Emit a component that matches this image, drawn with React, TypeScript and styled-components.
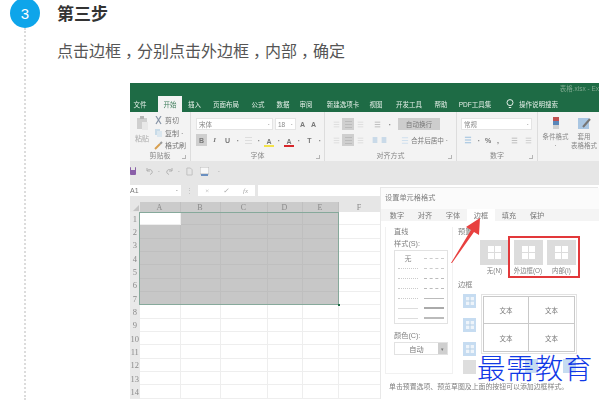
import React from "react";
import styled, { createGlobalStyle } from "styled-components";

const Global = createGlobalStyle`
  html, body { margin: 0; padding: 0; background: #fff; overflow: hidden; }
  body { font-family: "Liberation Sans", "Noto Sans CJK SC", sans-serif; }
`;
const CJK = `"Liberation Sans", "Noto Sans CJK SC", sans-serif`;

const Page = styled.div`
  width: 599px; height: 400px; display: flex; overflow: hidden; background: #fff;
`;
const Rail = styled.div`
  width: 57px; flex: none; position: relative;
  &::after {
    content: ""; position: absolute; left: 24px; top: 28px; bottom: 0;
    border-left: 2px dotted #dcdcdc;
  }
`;
const StepDot = styled.div`
  width: 30px; height: 30px; margin: -2px 0 0 10px; border-radius: 50%;
  background: #0ea5ea; color: #fff; display: flex; align-items: center; justify-content: center;
  font-size: 15px;
`;
const Main = styled.div`flex: 1; min-width: 0; display: flex; flex-direction: column;`;
const StepTitle = styled.h2`
  margin: 4px 0 0; font-size: 17px; line-height: 22px; font-weight: 700; color: #333;
`;
const StepText = styled.p`
  margin: 15px 0 0; font-size: 16px; line-height: 22px; color: #555;
`;
const Comma = styled.span`padding-left: 4px; letter-spacing: -4px;`;
const Shot = styled.div`
  margin: 20px 0 0 73px; width: 469px; height: 317px; flex: none; position: relative;
  overflow: hidden; background: #fff; font-family: ${CJK}; filter: blur(0.45px);
`;

/* title & tabs */
const GreenBar = styled.div`height: 29px; background: #1e6b45; display: flex; flex-direction: column;`;
const DocName = styled.div`
  height: 13px; font-size: 6.5px; line-height: 11px; color: #7fa98f; text-align: right; white-space: nowrap;
`;
const TabRow = styled.div`height: 16px; display: flex; align-items: stretch; font-size: 6.5px;`;
const RibbonTab = styled.div<{ $w: number; $active?: boolean; $start?: boolean }>`
  width: ${p => p.$w}px; flex: none; display: flex; align-items: center; gap: 5px;
  justify-content: ${p => (p.$start ? "flex-start" : "center")};
  padding-left: ${p => (p.$start ? 3 : 0)}px; box-sizing: border-box;
  white-space: nowrap;
  color: ${p => (p.$active ? "#3f7d5c" : "#e4efe8")};
  background: ${p => (p.$active ? "#f3f3f3" : "transparent")};
`;

/* ribbon */
const Ribbon = styled.div`height: 49px; background: #f3f3f3; display: flex; color: #777; font-size: 7px;`;
const Group = styled.div<{ $w: number; $last?: boolean }>`
  width: ${p => p.$w}px; flex: none; display: flex; flex-direction: column; box-sizing: border-box;
  border-right: ${p => (p.$last ? "none" : "1px solid #dddddd")};
`;
const GroupBody = styled.div`flex: 1; display: flex; min-height: 0;`;
const GroupLabel = styled.div`
  height: 10px; margin-bottom: 0; line-height: 10px; text-align: center; color: #888; font-size: 7px; white-space: nowrap; position: relative;
  &::after {
    content: ""; position: absolute; right: 4px; top: 4px; width: 3px; height: 3px;
    border-right: 1px solid #b5b5b5; border-bottom: 1px solid #b5b5b5;
  }
`;
const Paste = styled.div`
  width: 24px; flex: none; display: flex; flex-direction: column; align-items: center; padding-top: 4px; gap: 3px; color: #aaa;
`;
const ClipCol = styled.div`
  display: flex; flex-direction: column; gap: 2.5px; padding-top: 3px;
`;
const ClipItem = styled.div`display: flex; align-items: center; gap: 2px; height: 10px; white-space: nowrap; color: #777;`;
const Rows = styled.div<{ $pl?: number }>`
  flex: 1; display: flex; flex-direction: column; gap: 2px; padding: 5px 0 0 ${p => p.$pl ?? 5}px;
`;
const ToolRow = styled.div`display: flex; align-items: center; gap: 2px; height: 14px; white-space: nowrap;`;
const Field = styled.div<{ $w: number }>`
  width: ${p => p.$w}px; height: 12px; flex: none; box-sizing: border-box; background: #fff; border: 1px solid #e4e4e4;
  display: flex; align-items: center; justify-content: space-between; padding: 0 2px; font-size: 6.5px; color: #888;
`;
const Glyph = styled.span<{ $on?: boolean; $w?: number }>`
  width: ${p => p.$w ?? 11}px; height: 12px; flex: none; display: flex; align-items: center; justify-content: center;
  background: ${p => (p.$on ? "#cfcfcf" : "transparent")}; color: #777; font-size: 7px; font-weight: 700;
`;
const ItalicGlyph = styled(Glyph)`font-style: italic; font-family: "Liberation Serif", serif;`;
const Swatch = styled.span<{ $c: string }>`
  width: 10px; height: 11px; flex: none; display: flex; flex-direction: column; align-items: center; justify-content: flex-end;
  font-size: 7px; line-height: 7px; font-weight: 700; color: #777;
  border-bottom: 2px solid ${p => p.$c};
`;
const WrapBtn = styled.div`
  width: 42px; height: 12px; flex: none; background: #cdcdcd; display: flex; align-items: center; justify-content: center; color: #777; white-space: nowrap; font-size: 6.6px;
`;
const MergeText = styled.span`font-size: 6.6px; color: #777;`;
const TallBtns = styled.div`flex: 1; display: flex; gap: 2.5px; padding: 5px 0 0 4.5px;`;
const TallBtn = styled.div`
  width: 26px; display: flex; flex-direction: column; align-items: center; text-align: center; font-size: 6.5px; line-height: 9px; color: #888; gap: 2px; white-space: nowrap;
`;

/* QAT + formula */
const Qat = styled.div`height: 24px; background: #e6e6e6; display: flex; align-items: center; padding: 0 0 4px 0; box-sizing: border-box; color: #aaa; font-size: 7px;`;
const QatBtn = styled.div<{ $w: number }>`width: ${p => p.$w}px; flex: none; display: flex; align-items: center; justify-content: center;`;
const QatSave = styled(QatBtn)`justify-content: flex-start;`;
const FormulaRow = styled.div`height: 17px; background: #e6e6e6; display: flex; align-items: flex-start;`;
const NameBox = styled.div`
  width: 51px; height: 11px; background: #fff; display: flex; align-items: center; justify-content: space-between; padding: 0 3px 0 0; box-sizing: border-box; font-size: 7px; color: #777;
`;
const Grip = styled.div`width: 17px; height: 11px; display: flex; align-items: center; justify-content: center; color: #bbb; font-size: 7px;`;
const FxBox = styled.div`
  width: 57px; height: 11px; background: #fff; display: flex; align-items: center; justify-content: space-around; color: #aaa; font-size: 7px; font-family: "Liberation Serif", serif; font-style: italic;
`;
const FormulaInput = styled.div`flex: 1; margin-left: 3px; height: 11px; background: #fff;`;

/* sheet */
const Sheet = styled.div`
  position: relative; display: grid;
  grid-template-columns: 9.5px 41px 40px 47px 35px 36px 42px 1fr;
  grid-template-rows: 10px repeat(14, 13.33px);
`;
const Corner = styled.div`
  background: #e6e6e6; position: relative; overflow: hidden;
  &::after { content: ""; position: absolute; right: 1px; bottom: 1px; border-left: 6px solid transparent; border-bottom: 6px solid #c4c4c4; }
`;
const ColHead = styled.div<{ $sel?: boolean }>`
  background: ${p => (p.$sel ? "#cbcbcb" : "#e6e6e6")}; color: #8a8a8a; font: 8px "Liberation Serif", serif;
  display: flex; align-items: center; justify-content: center;
  border-right: 1px solid ${p => (p.$sel ? "#c0c0c0" : "#dddddd")}; box-sizing: border-box;
`;
const RowHead = styled.div`
  background: #e9e9e9; color: #8a8a8a; font: 8.5px "Liberation Serif", serif;
  display: flex; align-items: center; justify-content: center; overflow: hidden;
`;
const Cell = styled.div<{ $sel?: boolean }>`
  background: ${p => (p.$sel ? "#c7c7c7" : "#fff")}; box-sizing: border-box;
  border-right: 1px solid ${p => (p.$sel ? "#bfbfbf" : "#eeeeee")};
  border-bottom: 1px solid ${p => (p.$sel ? "#bfbfbf" : "#eeeeee")};
`;
const SelectionOutline = styled.div`
  position: absolute; left: 9px; top: 10px; width: 200px; height: 93px; box-sizing: border-box;
  border: 1px solid #86a99b; pointer-events: none;
  &::after { content: ""; position: absolute; right: -2px; bottom: -2px; width: 2px; height: 2px; background: #1e6b45; }
`;

/* dialog */
const Dialog = styled.div`
  position: absolute; left: 251px; top: 105px; width: 218px; height: 212px;
  background: #fbfbfb; box-shadow: -1px -1px 0 #e8e8e8; color: #777; font-size: 7.2px; display: flex; flex-direction: column;
`;
const DialogTitle = styled.div`height: 21px; line-height: 19px; padding-left: 4px; color: #808080; white-space: nowrap; flex: none;`;
const DialogTabs = styled.div`height: 12px; display: flex; padding-left: 2px; flex: none; background: #f4f4f4;`;
const DialogTab = styled.div<{ $active?: boolean }>`
  width: 28px; display: flex; align-items: center; justify-content: center; color: #777;
  background: ${p => (p.$active ? "#fff" : "transparent")};
`;
const Panel = styled.div`flex: 1; display: flex; gap: 5px; background: #fff; padding: 6px 0 0 4px; min-height: 0;`;
const LineBox = styled.div`
  width: 68px; height: 147px; flex: none; box-sizing: border-box; padding: 0 4px 0 8px; border: 1px solid #f1f1f1; border-top: none;
  display: flex; flex-direction: column;
`;
const Caption = styled.div<{ $mt?: number }>`
  height: 10px; line-height: 10px; white-space: nowrap; color: #808080; margin-top: ${p => p.$mt ?? 0}px; flex: none;
`;
const StyleList = styled.div`
  height: 74px; margin-top: 1px; border: 1px solid #e2e2e2; box-sizing: border-box; display: grid; grid-template-columns: 1fr 1fr; padding: 2px 0 0 0;
  grid-auto-rows: 10px; flex: none;
`;
const StyleCell = styled.div`display: flex; align-items: center; justify-content: center; color: #888; font-size: 7px;`;
const LineSample = styled.div<{ $k: string }>`
  width: 20px; border-top: ${p => p.$k};
`;
const ColorSelect = styled.div`
  margin-top: 1px; height: 13px; box-sizing: border-box; border: 1px solid #e2e2e2; display: flex; align-items: stretch; flex: none;
`;
const ColorValue = styled.div`flex: 1; display: flex; align-items: center; justify-content: center;`;
const ColorArrow = styled.div`width: 9px; background: #cfcfcf; display: flex; align-items: center; justify-content: center; font-size: 5px;`;
const RightCol = styled.div`flex: 1; min-width: 0; display: flex; flex-direction: column;`;
const Presets = styled.div`display: flex; gap: 4.5px; padding: 3px 0 0 22px; height: 43px; box-sizing: border-box; flex: none;`;
const Preset = styled.div`width: 29px; display: flex; flex-direction: column; align-items: center; gap: 2px; white-space: nowrap; font-size: 6.4px; line-height: 8px; color: #808080;`;
const PresetTile = styled.div`
  width: 29px; height: 25px; background: #dcdcdc; display: flex; align-items: center; justify-content: center; flex: none;
`;
const BorderArea = styled.div`display: flex; gap: 5px; padding: 4px 0 0 5px; flex: none;`;
const SideBtns = styled.div`width: 13px; flex: none; display: flex; flex-direction: column; gap: 10px;`;
const SideBtn = styled.div<{ $grey?: boolean; $mt?: number }>`
  width: 13px; height: 14px; background: ${p => (p.$grey ? "#dedede" : "#c6dcf1")}; display: flex; align-items: center; justify-content: center; flex: none;
  margin-top: ${p => p.$mt ?? 0}px;
`;
const PreviewCol = styled.div`width: 96px; flex: none; display: flex; flex-direction: column; gap: 5px;`;
const Preview = styled.div`
  width: 96px; height: 60px; box-sizing: border-box; padding: 1px; border: 1px solid #e2e2e2; flex: none;
`;
const PreviewGrid = styled.div`
  width: 100%; height: 100%; box-sizing: border-box; border: 1px solid #c9c9c9; display: grid; grid-template-columns: 1fr 1fr; grid-template-rows: 1fr 1fr;
`;
const PreviewCell = styled.div<{ $r?: boolean; $b?: boolean }>`
  display: flex; align-items: center; justify-content: center; font-size: 6.5px; color: #777;
  border-right: ${p => (p.$r ? "1px solid #c9c9c9" : "none")};
  border-bottom: ${p => (p.$b ? "1px solid #c9c9c9" : "none")};
`;
const BottomBtns = styled.div`display: flex; gap: 25px; padding-left: 44px;`;
const HelpText = styled.div`height: 18px; flex: none; background: #fff; padding: 0 0 0 8px; line-height: 10px; font-size: 6.9px; color: #808080; white-space: nowrap;`;
const RedFrame = styled.div`
  position: absolute; left: 127px; top: 48px; width: 72px; height: 42px; box-sizing: border-box; border: 2px solid #e2383a;
`;
const ArrowMark = styled.svg`position: absolute; left: 315px; top: 130px;`;
const Watermark = styled.div`
  position: absolute; left: 477px; top: 352px; font-size: 28.5px; line-height: 30px; letter-spacing: 0.4px; color: #1038e6; white-space: nowrap;
  font-family: "Noto Sans CJK SC", sans-serif; font-weight: 300;
`;

const Tile = () => (
  <svg width="13" height="13" viewBox="0 0 13 13"><rect width="13" height="13" fill="#fff" /><path d="M6.5 0v13M0 6.5h13" stroke="#dcdcdc" strokeWidth="1" /></svg>
);
const Side = () => (
  <svg width="8" height="8" viewBox="0 0 8 8"><rect width="8" height="8" fill="#eef4fa" /><path d="M4 0v8M0 4h8" stroke="#b5cfe6" /></svg>
);
const Box = ({ c = "#aaa", s = 9 }: { c?: string; s?: number }) => (
  <svg width={s} height={s} viewBox="0 0 9 9"><path d="M1 1.5h7M1 4.5h7M1 7.5h7" stroke={c} strokeWidth="1.2" /></svg>
);
const Turn = ({ flip }: { flip?: boolean }) => (
  <svg width="7" height="8" viewBox="0 0 7 8" fill="none" stroke="#b0b0b0" strokeWidth="1" style={flip ? { transform: "scaleX(-1)" } : undefined}>
    <path d="M1 1v3h3M1 4c1-2 4-2 5 0s-1 3-2 3.5" />
  </svg>
);

const tabs: [string, number, boolean?][] = [
  ["文件", 20], ["", 8], ["开始", 24, true], ["插入", 25], ["页面布局", 38], ["公式", 26], ["数据", 24], ["审阅", 22], ["新建选项卡", 52],
  ["视图", 14], ["开发工具", 52], ["帮助", 12], ["PDF工具集", 56],
];
const cols = ["A", "B", "C", "D", "E", "F", ""];
const lineSamples = [
  "1px dotted #ccc", "1px dashed #ccc", "1px dotted #ccc", "1px dashed #bbb", "1px dotted #ccc", "1px dashed #bbb",
  "1px dotted #ccc", "1px solid #bbb", "1px solid #ddd", "2px solid #aaa", "1px solid #ddd", "2px solid #bbb",
];

export default function App() {
  return (
    <Page>
      <Global />
      <Rail><StepDot>3</StepDot></Rail>
      <Main>
        <StepTitle>第三步</StepTitle>
        <StepText>点击边框<Comma>，</Comma>分别点击外边框<Comma>，</Comma>内部<Comma>，</Comma>确定</StepText>
        <Shot>
          <GreenBar>
            <DocName>表格.xlsx - Ex</DocName>
            <TabRow>
              {tabs.map(([t, w, a], i) => <RibbonTab key={i} $w={w} $active={a}>{t}</RibbonTab>)}
              <RibbonTab $w={60} $start>
                <svg width="8" height="10" viewBox="0 0 8 10" fill="none" stroke="#e4efe8"><circle cx="4" cy="3.6" r="3" /><path d="M2.8 8.5h2.4" /></svg>
                操作说明搜索
              </RibbonTab>
            </TabRow>
          </GreenBar>
          <Ribbon>
            <Group $w={61}>
              <GroupBody>
                <Paste>
                  <svg width="12" height="14" viewBox="0 0 12 14"><rect x="1" y="2" width="10" height="11" fill="#cfcfcf" /><rect x="4" y="0" width="4" height="3" fill="#b5b5b5" /><rect x="6" y="6" width="6" height="8" fill="#e8e8e8" /></svg>
                  <span>粘贴</span>
                </Paste>
                <ClipCol>
                  <ClipItem><svg width="9" height="9" viewBox="0 0 9 9"><path d="M2 0l5 8M7 0L2 8" stroke="#8794a6" strokeWidth="1.2" /></svg>剪切</ClipItem>
                  <ClipItem><svg width="9" height="9" viewBox="0 0 9 9"><rect x="1" y="1" width="5" height="6" fill="#c8dbe8" /><rect x="3" y="3" width="5" height="6" fill="#dbe7ef" /></svg>复制 ·</ClipItem>
                  <ClipItem><svg width="9" height="9" viewBox="0 0 9 9"><path d="M1 8l5-5" stroke="#d8a050" strokeWidth="2" /><path d="M6 3l2-2" stroke="#999" strokeWidth="2" /></svg>格式刷</ClipItem>
                </ClipCol>
              </GroupBody>
              <GroupLabel>剪贴板</GroupLabel>
            </Group>
            <Group $w={134}>
              <Rows>
                <ToolRow>
                  <Field $w={77}>宋体<span>·</span></Field>
                  <Field $w={21}>18<span>·</span></Field>
                  <Glyph $w={9}>A</Glyph><Glyph $w={9}>A</Glyph>
                </ToolRow>
                <ToolRow>
                  <Glyph $on>B</Glyph>
                  <ItalicGlyph>I</ItalicGlyph>
                  <Glyph>U</Glyph><Glyph $w={6}>·</Glyph>
                  <Glyph><Box c="#ddd" /></Glyph><Glyph $w={6}>·</Glyph>
                  <Swatch $c="#f3e24a">A</Swatch><Glyph $w={6}>·</Glyph>
                  <Swatch $c="#d8262a">A</Swatch><Glyph $w={6}>·</Glyph>
                  <Glyph>T</Glyph><Glyph $w={6}>·</Glyph>
                </ToolRow>
              </Rows>
              <GroupLabel>字体</GroupLabel>
            </Group>
            <Group $w={132}>
              <Rows $pl={7}>
                <ToolRow>
                  <Glyph $w={8}><Box c="#ddd" s={7} /></Glyph>
                  <Glyph $on $w={12}><Box c="#bbb" /></Glyph>
                  <Glyph $w={8}><Box c="#ddd" s={7} /></Glyph>
                  <Glyph $w={4} />
                  <Glyph $w={10}><Box c="#bbb" s={7} /></Glyph>
                  <Glyph $w={12}>·</Glyph>
                  <WrapBtn>自动换行</WrapBtn>
                </ToolRow>
                <ToolRow>
                  <Glyph $w={8}><Box c="#ddd" s={7} /></Glyph>
                  <Glyph $on $w={12}><Box c="#bbb" /></Glyph>
                  <Glyph $w={8}><Box c="#ddd" s={7} /></Glyph>
                  <Glyph $w={4} />
                  <Glyph $w={6}><Box c="#8ab4d8" s={6} /></Glyph>
                  <Glyph $w={8}><Box c="#8ab4d8" s={6} /></Glyph>
                  <Glyph $w={9} />
                  <Glyph $w={8}><Box c="#cfe0ee" /></Glyph>
                  <MergeText>合并后居中 ·</MergeText>
                </ToolRow>
              </Rows>
              <GroupLabel>对齐方式</GroupLabel>
            </Group>
            <Group $w={81}>
              <Rows $pl={4}>
                <ToolRow><Field $w={71}>常规<span>·</span></Field></ToolRow>
                <ToolRow>
                  <Glyph $w={13}><Box c="#9cc0de" s={8} /></Glyph>
                  <Glyph $w={6}>·</Glyph><Glyph $w={8}>%</Glyph><Glyph $w={8}>,</Glyph>
                  <Glyph $w={4} />
                  <Glyph $w={8}><Box c="#bbb" s={7} /></Glyph>
                  <Glyph $w={2} />
                  <Glyph $w={8}><Box c="#ccc" s={7} /></Glyph>
                </ToolRow>
              </Rows>
              <GroupLabel>数字</GroupLabel>
            </Group>
            <Group $w={61} $last>
              <TallBtns>
                <TallBtn>
                  <svg width="10" height="13" viewBox="0 0 10 13"><rect x="2" y="0" width="6" height="4" fill="#c05050" /><rect x="2" y="4" width="6" height="4" fill="#5a86b8" /><rect x="2" y="8" width="6" height="4" fill="#d0d0d0" /></svg>
                  <span>条件格式<br />·</span>
                </TallBtn>
                <TallBtn>
                  <svg width="14" height="13" viewBox="0 0 14 13"><rect x="1" y="1" width="11" height="11" fill="#a9c6e2" /><path d="M6 10L13 2" stroke="#777" strokeWidth="2" /></svg>
                  <span>套用<br />表格格式</span>
                </TallBtn>
              </TallBtns>
            </Group>
          </Ribbon>
          <Qat>
            <QatSave $w={15}><svg width="6" height="8" viewBox="0 0 6 8"><rect width="6" height="8" rx="1" fill="#8a5fa8" /><rect x="1" y="0" width="4" height="3" fill="#e6e6e6" /></svg></QatSave>
            <QatBtn $w={8}><Turn /></QatBtn>
            <QatBtn $w={12}>·</QatBtn>
            <QatBtn $w={8}><Turn flip /></QatBtn>
            <QatBtn $w={12}>·</QatBtn>
            <QatBtn $w={8}><svg width="7" height="9" viewBox="0 0 8 9" fill="none" stroke="#bbb"><path d="M1 .5h4l2 2v6H1z" /></svg></QatBtn>
            <QatBtn $w={7} />
            <QatBtn $w={9}><svg width="9" height="9" viewBox="0 0 9 9"><rect width="9" height="7" fill="#f8f8f8" stroke="#bbb" /><rect x="1" y="7" width="7" height="2" fill="#6a8fc0" /></svg></QatBtn>
            <QatBtn $w={20}>·</QatBtn>
          </Qat>
          <FormulaRow>
            <NameBox>A1<span>·</span></NameBox>
            <Grip>⋮</Grip>
            <FxBox><span>×</span><span>✓</span><span>fx</span></FxBox>
            <FormulaInput />
          </FormulaRow>
          <Sheet>
            <Corner />
            {cols.map((c, i) => <ColHead key={i} $sel={i < 5}>{c}</ColHead>)}
            {Array.from({ length: 14 }, (_, r) => (
              <React.Fragment key={r}>
                <RowHead>{r + 1}</RowHead>
                {cols.map((c, i) => <Cell key={i} $sel={r < 7 && i < 5 && !(r === 0 && i === 0)} />)}
              </React.Fragment>
            ))}
            <SelectionOutline />
          </Sheet>
          <Dialog>
            <DialogTitle>设置单元格格式</DialogTitle>
            <DialogTabs>
              <DialogTab>数字</DialogTab><DialogTab>对齐</DialogTab><DialogTab>字体</DialogTab>
              <DialogTab $active>边框</DialogTab><DialogTab>填充</DialogTab><DialogTab>保护</DialogTab>
            </DialogTabs>
            <Panel>
              <LineBox>
                <Caption>直线</Caption>
                <Caption $mt={2}>样式(S):</Caption>
                <StyleList>
                  <StyleCell>无</StyleCell>
                  <StyleCell><LineSample $k="1px dashed #ccc" /></StyleCell>
                  {lineSamples.map((k, i) => <StyleCell key={i}><LineSample $k={k} /></StyleCell>)}
                </StyleList>
                <Caption $mt={7}>颜色(C):</Caption>
                <ColorSelect><ColorValue>自动</ColorValue><ColorArrow>▾</ColorArrow></ColorSelect>
              </LineBox>
              <RightCol>
                <Caption>预置</Caption>
                <Presets>
                  <Preset><PresetTile><Tile /></PresetTile>无(N)</Preset>
                  <Preset><PresetTile><Tile /></PresetTile>外边框(O)</Preset>
                  <Preset><PresetTile><Tile /></PresetTile>内部(I)</Preset>
                </Presets>
                <Caption>边框</Caption>
                <BorderArea>
                  <SideBtns>
                    <SideBtn><Side /></SideBtn><SideBtn><Side /></SideBtn><SideBtn><Side /></SideBtn>
                    <SideBtn $grey $mt={-6} />
                  </SideBtns>
                  <PreviewCol>
                    <Preview>
                      <PreviewGrid>
                        <PreviewCell $r $b>文本</PreviewCell><PreviewCell $b>文本</PreviewCell>
                        <PreviewCell $r>文本</PreviewCell><PreviewCell>文本</PreviewCell>
                      </PreviewGrid>
                    </Preview>
                    <BottomBtns>
                      <SideBtn /><SideBtn />
                    </BottomBtns>
                  </PreviewCol>
                </BorderArea>
              </RightCol>
            </Panel>
            <HelpText>单击预置选项、预览草图及上面的按钮可以添加边框样式。</HelpText>
            <RedFrame />
          </Dialog>
          <ArrowMark width="40" height="50" viewBox="0 0 40 50">
            <path d="M6 50 L26 17 L21 14 L35 5 L34 22 L29 19 L7 50 Z" fill="#e8403f" />
          </ArrowMark>
        </Shot>
      </Main>
      <Watermark>最需教育</Watermark>
    </Page>
  );
}
